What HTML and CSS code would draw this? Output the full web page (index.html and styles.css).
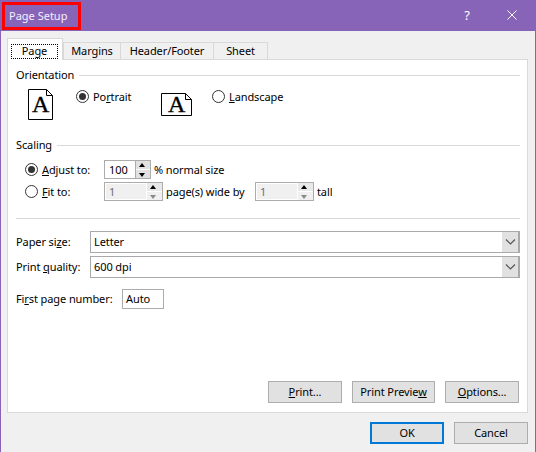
FILE: index.html
```html
<!DOCTYPE html>
<html lang="en">
<head>
<meta charset="utf-8">
<title>Page Setup</title>
<link rel="stylesheet" href="styles.css">
</head>
<body>
<div class="dialog">
  <header class="titlebar">
    <div class="title">Page Setup</div>
    <div class="help">?</div>
    <svg class="close" width="10" height="10" viewBox="0 0 10 10"><path d="M.5.5l9 9M9.500.5l-9 9" stroke="#fff" fill="none"/></svg>
  </header>
  <div class="tabs">
    <div class="tab active"><span class="focus">Page</span></div>
    <div class="tab t-margins">Margins</div>
    <div class="tab t-header">Header/Footer</div>
    <div class="tab t-sheet">Sheet</div>
  </div>
  <main class="panel">
    <div class="legend"><span>Orientation</span><i></i></div>
    <div class="orient">
      <svg class="page-portrait" width="25" height="31" viewBox="0 0 25 31"><path d="M.5.5h18l6 6v24H.5zM18.500.5v6h6" fill="#fff" stroke="#000"/><text x="12.500" y="23" class="glyph" text-anchor="middle">A</text></svg>
      <span class="radio on r-portrait"></span><span class="lbl l-portrait">Po<u>r</u>trait</span>
      <svg class="page-land" width="31" height="23" viewBox="0 0 31 23"><path d="M.5.5h24l6 6v16H.5zM24.500.5v6h6" fill="#fff" stroke="#000"/><text x="15.500" y="19" class="glyph" text-anchor="middle">A</text></svg>
      <span class="radio r-land"></span><span class="lbl l-land"><u>L</u>andscape</span>
    </div>
    <div class="legend scaling"><span>Scaling</span><i></i></div>
    <div class="row r1">
      <span class="radio on"></span><span class="lbl col-a"><u>A</u>djust to:</span>
      <div class="spin s-adjust"><span class="val">100</span><span class="btns"><b class="up"></b><b class="down"></b></span></div>
      <span class="lbl after">% normal size</span>
    </div>
    <div class="row r2">
      <span class="radio"></span><span class="lbl col-a"><u>F</u>it to:</span>
      <div class="spin dis"><span class="val">1</span><span class="btns"><b class="up"></b><b class="down"></b></span></div>
      <span class="lbl after2">page(s) wide by</span>
      <div class="spin dis"><span class="val">1</span><span class="btns"><b class="up"></b><b class="down"></b></span></div>
      <span class="lbl after">tall</span>
    </div>
    <div class="divider"></div>
    <div class="field f1">
      <span class="flabel">Paper si<u>z</u>e:</span>
      <div class="select"><span>Letter</span><span class="arrow"><svg width="11" height="6" viewBox="0 0 11 6"><path d="M1 .5l4.500 4.500L10 .5" fill="none" stroke="#555" stroke-width="1.200"/></svg></span></div>
    </div>
    <div class="field f2">
      <span class="flabel">Print <u>q</u>uality:</span>
      <div class="select"><span>600 dpi</span><span class="arrow"><svg width="11" height="6" viewBox="0 0 11 6"><path d="M1 .5l4.500 4.500L10 .5" fill="none" stroke="#555" stroke-width="1.200"/></svg></span></div>
    </div>
    <div class="first">
      <span>Fi<u>r</u>st page number:</span>
      <div class="auto">Auto</div>
    </div>
    <div class="panel-btns">
      <div class="btn"><span><u>P</u>rint...</span></div>
      <div class="btn"><span>Print Previe<u>w</u></span></div>
      <div class="btn"><span><u>O</u>ptions...</span></div>
    </div>
  </main>
  <footer class="footer">
    <div class="btn ok">OK</div>
    <div class="btn">Cancel</div>
  </footer>
</div>
</body>
</html>
```
FILE: styles.css
```css
* { box-sizing: border-box; }
html, body { margin: 0; padding: 0; }
body { width: 536px; height: 452px; overflow: hidden; font: 11px/16px "Noto Sans", "Open Sans", sans-serif; letter-spacing: -.1px; color: #000; }
u { text-underline-offset: 1px; }
svg { overflow: visible; flex: none; }
.dialog { width: 536px; height: 452px; background: #f0f0f0; border: solid #8764b8; border-width: 0 1px 0 1px; display: flex; flex-direction: column; }
.titlebar { height: 31px; margin: 0 -1px; background: #8764b8; color: #f4f0fa; display: flex; align-items: center; padding: 1px 0 0 2px; flex: none; }
.title { width: 79px; height: 28px; border: 3px solid #f00; line-height: 21px; padding-left: 4px; letter-spacing: 0; }
.help { margin-left: auto; width: 12px; text-align: center; font-size: 13px; margin-right: 34px; margin-top: -3px; color: #fff; }
.close { margin-right: 19px; margin-top: -2px; }
.tabs { display: flex; align-items: flex-end; height: 28px; padding-left: 6px; flex: none; position: relative; z-index: 1; }
.tab { height: 17px; border: 1px solid #d9d9d9; border-bottom: 0; margin-left: -1px; background: #f0f0f0; text-align: center; line-height: 15px; }
.tab.active { width: 56px; height: 22px; margin: 0 0 -1px 0; background: #fff; padding: 5px 4px 1px 3px; }
.focus { display: block; height: 15px; border: 1px dotted #000; line-height: 12px; }
.t-margins { width: 58px; margin-left: 0; }
.t-header { width: 94px; }
.t-sheet { width: 55px; }
.panel { width: 521px; height: 354px; margin-left: 6px; background: #fff; border: 1px solid #d9d9d9; padding: 0 7px 0 8px; flex: none; display: flex; flex-direction: column; }
.legend { display: flex; align-items: center; gap: 5px; height: 16px; margin-top: 7px; flex: none; }
.legend i { flex: 1; height: 1px; background: #d9d9d9; }
.legend.scaling { margin-top: 1px; }
.orient { display: flex; align-items: flex-start; height: 47px; padding-left: 12px; margin-top: 6px; flex: none; }
.radio { width: 13px; height: 13px; border: 1px solid #333; border-radius: 50%; background: #fff; display: block; flex: none; position: relative; }
.radio.on::after { content: ""; position: absolute; left: 2px; top: 2px; width: 7px; height: 7px; border-radius: 50%; background: #333; }
.r-portrait { margin: 1px 0 0 23px; }
.l-portrait { margin: 0 0 0 4px; width: 68px; }
.page-land { margin-top: 4px; }
.r-land { margin: 1px 0 0 20px; }
.l-land { margin: 0 0 0 4px; }
.row { display: flex; align-items: center; height: 19px; padding-left: 9px; flex: none; }
.r1 { margin-top: 7px; }
.r2 { margin-top: 3px; }
.col-a { width: 66px; padding-left: 4px; }
.spin { height: 19px; border: 1px solid #acacac; background: #fff; display: flex; width: 59px; padding: 1px; }
.s-adjust { width: 47px; }
.val { flex: 1; padding-left: 3px; line-height: 15px; }
.btns { width: 15px; display: flex; flex-direction: column; margin: -1px -1px -1px 0; border-left: 1px solid #acacac; }
.btns b { flex: 1; background: #e1e1e1; position: relative; display: block; }
.btns .up { border-bottom: 1px solid #fff; }
.btns .up::after, .btns .down::after { content: ""; position: absolute; left: 3px; border-left: 3.500px solid transparent; border-right: 3.500px solid transparent; }
.btns .up::after { top: 2px; border-bottom: 4px solid #000; }
.btns .down::after { top: 3px; border-top: 4px solid #000; }
.dis .val { background: #f0f0f0; color: #6d6d6d; margin-right: 1px; }
.dis .btns { border-left: 0; }
.dis .btns b { background: #f0f0f0; }
.dis .btns .up { background: #e8e8e8; }
.dis .btns .down::after { border-top-color: #8a8a8a; }
.after { margin-left: 3px; }
.after2 { margin: 0 3px; width: 86px; }
.divider { height: 1px; background: #d9d9d9; margin-top: 17px; flex: none; }
.field { display: flex; align-items: center; height: 22px; flex: none; }
.f1 { margin-top: 12px; }
.f2 { margin-top: 3px; }
.flabel { width: 74px; }
.select { flex: 1; height: 22px; border: 1px solid #a9a9ad; border-right-width: 2px; display: flex; align-items: center; justify-content: space-between; background: #fff; padding-left: 3px; }
.arrow { width: 16px; height: 20px; background: #e1e1e1; display: flex; align-items: center; justify-content: center; }
.first { display: flex; align-items: center; height: 20px; margin-top: 11px; flex: none; }
.first span { width: 106px; }
.auto { width: 42px; height: 20px; border: 1px solid #acacac; padding-left: 3px; line-height: 18px; }
.panel-btns { display: flex; justify-content: flex-end; gap: 10px; margin-top: 72px; padding-right: 1px; flex: none; }
.btn { width: 74px; height: 22px; border: 1px solid #adadad; background: #e1e1e1; text-align: center; line-height: 19px; flex: none; }
.panel-btns .btn:nth-child(2) { width: 83px; }
.footer { display: flex; justify-content: flex-end; gap: 10px; padding: 9px 7px 0 0; flex: none; }
.footer .ok { border: 2px solid #0078d7; line-height: 17px; }
.glyph { font: 24px "Liberation Serif", serif; fill: #000; stroke: #000; stroke-width: .35px; }
```
